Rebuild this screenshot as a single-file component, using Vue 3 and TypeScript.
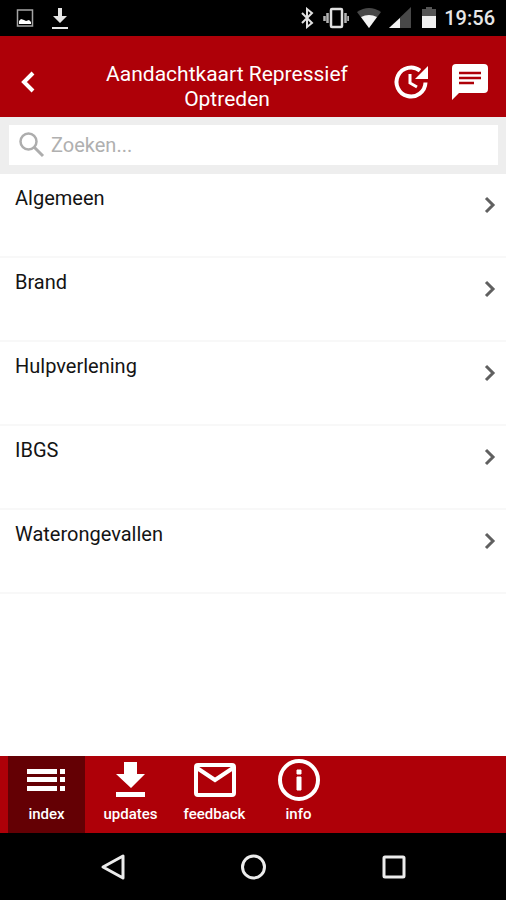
<script setup lang="ts">
import { computed, ref } from 'vue'

interface Tab {
  id: string
  label: string
}

const categories: string[] = ['Algemeen', 'Brand', 'Hulpverlening', 'IBGS', 'Waterongevallen']
const tabs: Tab[] = [
  { id: 'index', label: 'index' },
  { id: 'updates', label: 'updates' },
  { id: 'feedback', label: 'feedback' },
  { id: 'info', label: 'info' },
]

const query = ref('')
const activeTab = ref('index')
const visible = computed(() =>
  categories.filter((name) => name.toLowerCase().includes(query.value.trim().toLowerCase())),
)
</script>

<template>
  <div class="screen">
    <div class="status">
      <div class="status-group">
        <svg width="18" height="20" viewBox="0 0 18 20">
          <rect x="1.500" y="2" width="15" height="16" fill="none" stroke="#a5a5a5" stroke-width="1.500" />
          <path d="M3 16v-3l2-2 3 1 2 1 3-1 2 2v2z" fill="#fff" />
        </svg>
        <svg width="16" height="22" viewBox="0 0 16 22">
          <path d="M6 1h4v8h5l-7 7-7-7h5zM0 20h16v2H0z" fill="#e6e6e6" />
        </svg>
      </div>
      <div class="status-group right">
        <svg width="16" height="22" viewBox="0 0 16 22">
          <path d="M3 6l10 10-5 4V2l5 4L3 16" fill="none" stroke="#e0e0e0" stroke-width="2" />
        </svg>
        <svg width="26" height="22" viewBox="0 0 26 22">
          <rect x="8" y="2" width="11" height="18" rx="1" fill="none" stroke="#e0e0e0" stroke-width="2.500" />
          <path d="M4.500 6v10M22.500 6v10M1.500 9v5M25.500 9v5" stroke="#b4b4b4" stroke-width="2.500" />
        </svg>
        <svg width="24" height="22" viewBox="0 0 24 22">
          <path d="M0 5Q12-3 24 5L12 21z" fill="#484848" />
          <path d="M4 10Q12 6 20 10L12 21z" fill="#f4f4f4" />
        </svg>
        <svg width="22" height="22" viewBox="0 0 22 22">
          <path d="M22 0v21H0z" fill="#484848" />
          <path d="M11 11v10H0z" fill="#f4f4f4" />
        </svg>
        <svg class="battery" width="14" height="22" viewBox="0 0 14 22">
          <path d="M0 2h4V0h6v2h4v8H0z" fill="#555" />
          <path d="M0 9h14v12H0z" fill="#f0f0f0" />
        </svg>
        <time>19:56</time>
      </div>
    </div>

    <header class="header">
      <button class="back" type="button" aria-label="Terug">
        <svg width="24" height="24" viewBox="0 0 24 24">
          <path d="M17 3L8 12l9 9" fill="none" stroke="#fff" stroke-width="4" />
        </svg>
      </button>
      <h1>Aandachtkaart Repressief Optreden</h1>
      <div class="actions">
        <button type="button" aria-label="Geschiedenis">
          <svg width="36" height="36" viewBox="0 0 36 36">
            <path d="M27 6.600A14.500 14.500 0 1 0 32.500 18.500" fill="none" stroke="#fff" stroke-width="4" />
            <path d="M35 2v13H22l4-4z" fill="#fff" />
            <path d="M17 10v9l7 4" fill="none" stroke="#fff" stroke-width="3" />
          </svg>
        </button>
        <button type="button" aria-label="Berichten">
          <svg width="36" height="36" viewBox="0 0 36 36">
            <path d="M4 0h28a4 4 0 0 1 4 4v21a4 4 0 0 1-4 4H7l-7 7V4a4 4 0 0 1 4-4z" fill="#fff" />
            <path d="M7 9h22M7 14h22M7 19h15" stroke="#ae0008" stroke-width="2.500" />
          </svg>
        </button>
      </div>
    </header>

    <div class="search">
      <label class="field">
        <svg width="26" height="26" viewBox="0 0 26 26" aria-hidden="true">
          <circle cx="9.500" cy="9.500" r="8" fill="none" stroke="#adadad" stroke-width="2.500" />
          <path d="M15 15l9 9" stroke="#adadad" stroke-width="3" />
        </svg>
        <input v-model="query" type="text" placeholder="Zoeken..." aria-label="Zoeken" />
      </label>
    </div>

    <main class="content">
      <ul class="list">
        <li v-for="name in visible" :key="name">
          <a href="#">
            <span>{{ name }}</span>
            <svg width="12" height="18" viewBox="0 0 12 18" aria-hidden="true">
              <path d="M2 2l7 7-7 7" fill="none" stroke="#606060" stroke-width="3" />
            </svg>
          </a>
        </li>
      </ul>
    </main>

    <nav class="tabs">
      <button
        v-for="tab in tabs"
        :key="tab.id"
        type="button"
        :class="{ active: tab.id === activeTab }"
        @click="activeTab = tab.id"
      >
        <svg width="42" height="42" viewBox="0 0 42 42" aria-hidden="true">
          <path
            v-if="tab.id === 'index'"
            d="M1 10h30v5H1zM34 10h5v5h-5zM1 18h30v5H1zM34 18h5v5h-5zM1 27h30v5H1zM34 27h5v5h-5z"
            fill="#fff"
          />
          <path
            v-else-if="tab.id === 'updates'"
            d="M14 3h13v12h8L21 29 6 15h8zM6 33h29v5H6z"
            fill="#fff"
          />
          <g v-else-if="tab.id === 'feedback'" fill="none" stroke="#fff" stroke-width="4">
            <rect x="2" y="6" width="38" height="30" rx="2" />
            <path d="M3 9l18 12 18-12" />
          </g>
          <g v-else>
            <circle cx="21" cy="21" r="19" fill="none" stroke="#fff" stroke-width="4" />
            <path d="M19 11h4v4h-4zM19 18h4v13h-4z" fill="#fff" stroke="#fff" stroke-linejoin="round" />
          </g>
        </svg>
        <span>{{ tab.label }}</span>
      </button>
    </nav>

    <div class="system">
      <button type="button" aria-label="Vorige">
        <svg width="28" height="28" viewBox="0 0 28 28">
          <path d="M25 3v22L5 14z" fill="none" stroke="#ececec" stroke-width="3" stroke-linejoin="round" />
        </svg>
      </button>
      <button type="button" aria-label="Startscherm">
        <svg width="28" height="28" viewBox="0 0 28 28">
          <circle cx="14.500" cy="14" r="11" fill="none" stroke="#ececec" stroke-width="3" />
        </svg>
      </button>
      <button type="button" aria-label="Overzicht">
        <svg width="28" height="28" viewBox="0 0 28 28">
          <rect x="4" y="4" width="20" height="20" rx="1" fill="none" stroke="#ececec" stroke-width="3" />
        </svg>
      </button>
    </div>
  </div>
</template>

<style>
body {
  margin: 0;
}
</style>

<style scoped>
.screen {
  display: flex;
  flex-direction: column;
  min-height: 100vh;
  background: #fff;
  color: #141414;
  font-family: Roboto, 'Liberation Sans', sans-serif;
}
svg {
  display: block;
  flex: none;
}
button {
  padding: 0;
  border: 0;
  background: none;
  color: inherit;
  font: inherit;
  cursor: pointer;
}
.status {
  display: flex;
  align-items: center;
  justify-content: space-between;
  height: 36px;
  padding: 0 11px 0 16px;
  background: #000;
  color: #e6e6e6;
}
.status-group {
  display: flex;
  align-items: center;
  gap: 18px;
}
.status-group.right {
  gap: 8px;
}
.battery {
  margin-left: 3px;
}
time {
  font-size: 20px;
  font-weight: 500;
  line-height: 24px;
}
.header {
  display: flex;
  align-items: center;
  box-sizing: border-box;
  min-height: 81px;
  padding: 11px 18px 0 16px;
  background: #ae0008;
  color: #fff;
}
.back {
  width: 48px;
}
h1 {
  flex: 1;
  margin: 0;
  padding: 10px 32px 0;
  font-size: 21px;
  font-weight: 400;
  line-height: 25px;
  text-align: center;
}
.actions {
  display: flex;
  gap: 23px;
  padding-left: 3px;
}
.search {
  padding: 8px 8px 9px 9px;
  background: #eee;
}
.field {
  display: flex;
  align-items: center;
  gap: 6px;
  height: 40px;
  padding: 0 10px;
  background: #fff;
}
input {
  flex: 1;
  min-width: 0;
  padding: 0;
  border: 0;
  outline: 0;
  background: none;
  color: #141414;
  font: inherit;
  font-size: 20px;
  line-height: 24px;
}
input::placeholder {
  color: #b0b0b0;
  opacity: 1;
}
.content {
  flex: 1;
}
.list {
  margin: 0;
  padding: 0;
  list-style: none;
}
.list a {
  display: flex;
  align-items: flex-start;
  justify-content: space-between;
  box-sizing: border-box;
  min-height: 84px;
  padding: 12px 10px 0 15px;
  border-bottom: 2px solid #f8f8f8;
  color: inherit;
  font-size: 20px;
  line-height: 24px;
  text-decoration: none;
}
.list svg {
  margin-top: 10px;
}
.tabs {
  display: flex;
  gap: 7px;
  padding: 0 8px;
  background: #ae0008;
  color: #fff;
}
.tabs button {
  display: flex;
  flex-direction: column;
  align-items: center;
  width: 77px;
  height: 77px;
  padding-top: 3px;
  font-size: 15px;
  font-weight: 500;
  line-height: 26px;
}
.tabs .active {
  background: #640004;
}
.system {
  display: flex;
  align-items: center;
  justify-content: center;
  gap: 113px;
  height: 67px;
  background: #000;
}
</style>
